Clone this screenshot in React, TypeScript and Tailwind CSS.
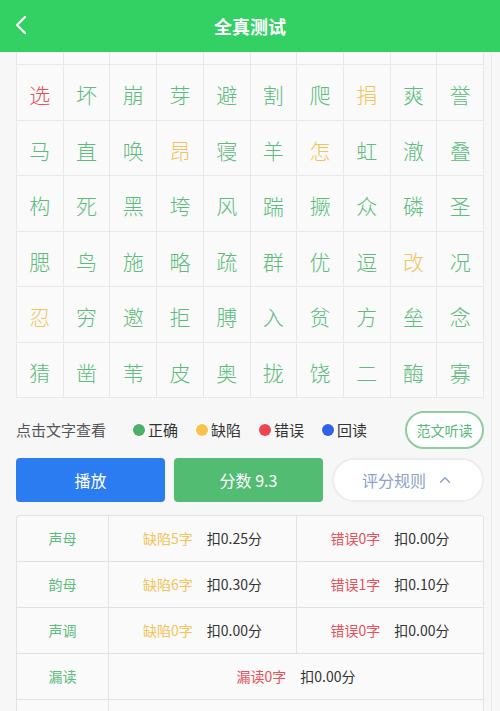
import { ChevronLeft, ChevronUp } from 'lucide-react';

type Mark = 'ok' | 'lack' | 'err';

const ROWS: string[] = [
  '选坏崩芽避割爬捐爽誉',
  '马直唤昂寝羊怎虹澈叠',
  '构死黑垮风踹撅众磷圣',
  '腮鸟施略疏群优逗改况',
  '忍穷邀拒膊入贫方垒念',
  '猜凿苇皮奥拢饶二酶寡',
];

// chars that are not plain "correct"
const MARKS: Record<string, Mark> = {
  选: 'err',
  捐: 'lack',
  昂: 'lack',
  怎: 'lack',
  改: 'lack',
  忍: 'lack',
};

const markColor = (m: Mark) => {
  switch (m) {
    case 'err': return 'text-[#e8505a]';
    case 'lack': return 'text-[#f4c35a]';
    default: return 'text-[#5dbb7c]';
  }
};

const SCORE_ROWS = [
  { label: '声母', lack: '缺陷5字', lackCut: '扣0.25分', err: '错误0字', errCut: '扣0.00分' },
  { label: '韵母', lack: '缺陷6字', lackCut: '扣0.30分', err: '错误1字', errCut: '扣0.10分' },
  { label: '声调', lack: '缺陷0字', lackCut: '扣0.00分', err: '错误0字', errCut: '扣0.00分' },
];

const font = "font-['Noto_Sans_CJK_SC',sans-serif]";

export default function App() {
  return (
    <div className={`w-[500px] h-[711px] overflow-hidden bg-[#f7f7f7] ${font}`}>
      {/* header */}
      <div className="h-[52px] bg-[#33d063] flex items-center relative">
        <ChevronLeft className="absolute left-[5px] top-[9px] text-white" size={32} strokeWidth={1.6} />
        <h1 className="flex-1 text-center text-white text-[18px] font-bold">全真测试</h1>
      </div>

      <div className="flex">
        <div className="w-[492px] border-r border-[#ececec]">
          {/* character grid */}
          <div className="ml-4 w-[468px] grid grid-cols-10 border-l border-[#e8e8e8]">
            {Array.from({ length: 10 }).map((_, i) => (
              <div key={'p' + i} className="h-[13px] border-r border-b border-[#e8e8e8] bg-[#fafafa]" />
            ))}
            {ROWS.map((row, r) =>
              row.split('').map((ch, c) => (
                <div
                  key={r + '-' + c}
                  className={`h-[55.5px] pt-[5px] flex items-center justify-center border-r border-b border-[#e8e8e8] bg-[#fafafa] text-[21px] font-light ${markColor(MARKS[ch] ?? 'ok')}`}
                >
                  {ch}
                </div>
              ))
            )}
          </div>

          {/* legend */}
          <div className="ml-4 w-[468px] h-[60px] pt-[4px] flex items-center">
            <span className="text-[15px] text-[#555]">点击文字查看</span>
            <div className="ml-[27px] flex items-center gap-[18px] text-[15px] text-[#333]">
              <span className="flex items-center gap-[3px]">
                <span className="w-[12px] h-[12px] rounded-full bg-[#4caf6a] ring-1 ring-white" />正确
              </span>
              <span className="flex items-center gap-[3px]">
                <span className="w-[12px] h-[12px] rounded-full bg-[#f7c34e] ring-1 ring-white" />缺陷
              </span>
              <span className="flex items-center gap-[3px]">
                <span className="w-[12px] h-[12px] rounded-full bg-[#ee4551] ring-1 ring-white" />错误
              </span>
              <span className="flex items-center gap-[3px]">
                <span className="w-[12px] h-[12px] rounded-full bg-[#2f62e8] ring-1 ring-white" />回读
              </span>
            </div>
            <button className="ml-auto w-[79px] h-[38px] rounded-full border-2 border-[#8fcc9f] text-[14px] text-[#56b978] bg-white">
              范文听读
            </button>
          </div>

          {/* buttons */}
          <div className="ml-4 w-[468px] flex gap-[9px] h-[44px]">
            <button className="w-[149px] rounded-[4px] bg-[#2b7cf0] text-white text-[16px]">播放</button>
            <button className="w-[149px] rounded-[4px] bg-[#52bd72] text-white text-[16px]">分数 9.3</button>
            <button className="flex-1 rounded-full border-2 border-[#ececec] bg-white text-[16px] text-[#8ca2c8] flex items-center justify-center gap-[10px]">
              评分规则
              <ChevronUp size={18} strokeWidth={2} />
            </button>
          </div>

          {/* score table */}
          <div className="ml-4 mt-[13px] w-[468px] border-t border-l border-[#e2e2e2] rounded-t-[4px] bg-[#fafafa] text-[14px]">
            {SCORE_ROWS.map((row) => (
              <div key={row.label} className="flex h-[46px]">
                <div className="w-[92px] flex items-center justify-center border-r border-b border-[#e2e2e2] text-[#5dbb7c]">
                  {row.label}
                </div>
                <div className="w-[188px] flex items-center justify-center gap-[14px] border-r border-b border-[#e2e2e2]">
                  <span className="text-[#f4c35a]">{row.lack}</span>
                  <span className="text-[#333]">{row.lackCut}</span>
                </div>
                <div className="flex-1 flex items-center justify-center gap-[14px] border-r border-b border-[#e2e2e2]">
                  <span className="text-[#e8505a]">{row.err}</span>
                  <span className="text-[#333]">{row.errCut}</span>
                </div>
              </div>
            ))}
            <div className="flex h-[46px]">
              <div className="w-[92px] flex items-center justify-center border-r border-b border-[#e2e2e2] text-[#5dbb7c]">
                漏读
              </div>
              <div className="flex-1 flex items-center justify-center gap-[14px] border-r border-b border-[#e2e2e2]">
                <span className="text-[#e8505a]">漏读0字</span>
                <span className="text-[#333]">扣0.00分</span>
              </div>
            </div>
            <div className="flex h-[46px]">
              <div className="w-[92px] border-r border-[#e2e2e2]" />
              <div className="flex-1 border-r border-[#e2e2e2]" />
            </div>
          </div>
        </div>
      </div>
    </div>
  );
}
